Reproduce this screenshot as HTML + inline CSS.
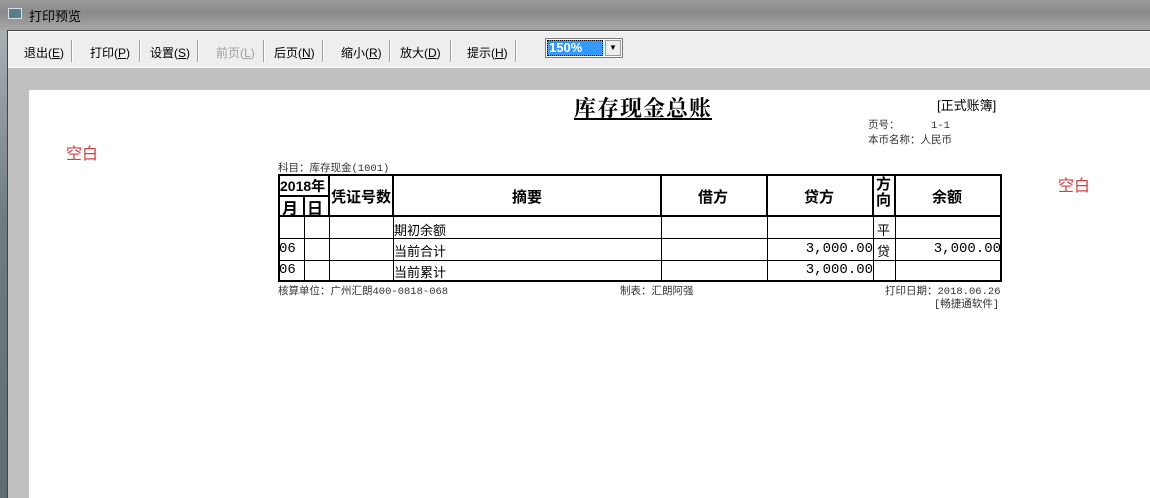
<!DOCTYPE html>
<html><head><meta charset="utf-8"><style>
*{margin:0;padding:0;box-sizing:border-box}
body{width:1150px;height:498px;overflow:hidden;position:relative;background:#c0c0c0;font-family:"Liberation Sans","Noto Sans CJK SC",sans-serif;}
.a{position:absolute;white-space:nowrap}
.tb{font-size:12px;color:#000;top:44px}
.sep{position:absolute;top:40px;width:2px;height:22px;border-left:1px solid #a0a0a0;border-right:1px solid #fff}
.h{position:absolute;background:#000}
.s{font-family:"Liberation Serif","Noto Serif CJK SC",serif}
.sm{font-size:10.5px;color:#333;font-family:"Liberation Mono","Noto Sans CJK SC",monospace}
.c{font-size:13px;font-family:"Liberation Mono","Noto Sans CJK SC",monospace}
.n{font-size:14px;font-family:"Liberation Mono",monospace}
.b{font-weight:bold;font-size:15px;font-family:"Liberation Sans","Noto Sans CJK SC",sans-serif}
</style></head><body>
<div class="a" style="left:0;top:0;width:1150px;height:31px;background:linear-gradient(#9a9a9a,#8a8a8a 40%,#a8a8a8)"></div>
<div class="a" style="left:0;top:31px;width:8px;height:467px;background:linear-gradient(#a8b0b4,#6f7c84 40%,#5f6c74)"></div>
<div class="a" style="left:7px;top:30px;width:1143px;height:1px;background:#444"></div>
<div class="a" style="left:7px;top:30px;width:1px;height:468px;background:#444"></div>
<div class="a" style="left:8px;top:8px;width:14px;height:11px;background:#5a7f88;border:1px solid #dde"></div>
<div class="a" style="left:29px;top:6px;font-size:13px;color:#000">打印预览</div>
<div class="a" style="left:8px;top:31px;width:1142px;height:36px;background:#eeeeee;border-top:1px solid #fff"></div>
<div class="a tb" style="left:24px">退出(<u>E</u>)</div>
<div class="sep" style="left:71px"></div>
<div class="a tb" style="left:90px">打印(<u>P</u>)</div>
<div class="sep" style="left:139px"></div>
<div class="a tb" style="left:150px">设置(<u>S</u>)</div>
<div class="sep" style="left:197px"></div>
<div class="a tb" style="left:216px;color:#a0a0a0">前页(<u>L</u>)</div>
<div class="sep" style="left:263px"></div>
<div class="a tb" style="left:274px">后页(<u>N</u>)</div>
<div class="sep" style="left:322px"></div>
<div class="a tb" style="left:341px">缩小(<u>R</u>)</div>
<div class="sep" style="left:389px"></div>
<div class="a tb" style="left:400px">放大(<u>D</u>)</div>
<div class="sep" style="left:450px"></div>
<div class="a tb" style="left:467px">提示(<u>H</u>)</div>
<div class="sep" style="left:515px"></div>
<div class="a" style="left:545px;top:38px;width:78px;height:20px;background:#fff;border:1px solid #7a7a7a"></div>
<div class="a" style="left:547px;top:40px;width:56px;height:16px;background:#3399ff;border:1px dotted #000;color:#fff;font-size:13px;font-weight:bold;line-height:14px;padding-left:1px">150%</div>
<div class="a" style="left:605px;top:40px;width:16px;height:16px;background:#eee;border:1px solid #999;font-size:8px;text-align:center;line-height:14px">▼</div>
<div class="a" style="left:8px;top:67px;width:1142px;height:1px;background:#f8f8f8"></div>
<div class="a" style="left:29px;top:90px;width:1121px;height:408px;background:#fff"></div>
<div class="a" style="left:66px;top:140px;font-size:16px;color:#d04040">空白</div>
<div class="a" style="left:1058px;top:172px;font-size:16px;color:#d04040">空白</div>
<div class="a s" style="left:574px;top:92px;font-size:22px;font-weight:bold;text-decoration:underline;letter-spacing:1px">库存现金总账</div>
<div class="a" style="left:937px;top:95px;font-size:13px">[正式账簿]</div>
<div class="a sm" style="left:868px;top:117px">页号：&nbsp;&nbsp;&nbsp;&nbsp;&nbsp;1-1</div>
<div class="a sm" style="left:868px;top:132px">本币名称：人民币</div>
<div class="a sm" style="left:278px;top:160px">科目：库存现金(1001)</div>
<div class="h" style="left:278px;top:174px;width:724px;height:2px"></div>
<div class="h" style="left:278px;top:195px;width:51px;height:2px"></div>
<div class="h" style="left:278px;top:215px;width:724px;height:2px"></div>
<div class="h" style="left:278px;top:238px;width:724px;height:1px"></div>
<div class="h" style="left:278px;top:260px;width:724px;height:1px"></div>
<div class="h" style="left:278px;top:280px;width:724px;height:2px"></div>
<div class="h" style="left:278px;top:174px;width:2px;height:108px"></div>
<div class="h" style="left:303px;top:195px;width:2px;height:21px"></div>
<div class="h" style="left:304px;top:216px;width:1px;height:65px"></div>
<div class="h" style="left:328px;top:174px;width:2px;height:42px"></div>
<div class="h" style="left:329px;top:216px;width:1px;height:65px"></div>
<div class="h" style="left:392px;top:174px;width:2px;height:42px"></div>
<div class="h" style="left:393px;top:216px;width:1px;height:65px"></div>
<div class="h" style="left:660px;top:174px;width:2px;height:42px"></div>
<div class="h" style="left:661px;top:216px;width:1px;height:65px"></div>
<div class="h" style="left:766px;top:174px;width:2px;height:42px"></div>
<div class="h" style="left:767px;top:216px;width:1px;height:65px"></div>
<div class="h" style="left:872px;top:174px;width:2px;height:42px"></div>
<div class="h" style="left:873px;top:216px;width:1px;height:65px"></div>
<div class="h" style="left:894px;top:174px;width:2px;height:42px"></div>
<div class="h" style="left:895px;top:216px;width:1px;height:65px"></div>
<div class="h" style="left:1000px;top:174px;width:2px;height:108px"></div>
<div class="a b" style="left:280px;top:176px;font-size:14px">2018年</div>
<div class="a b" style="left:282px;top:195px;font-size:16px">月</div>
<div class="a b" style="left:307px;top:195px;font-size:16px">日</div>
<div class="a b" style="left:331px;top:186px">凭证号数</div>
<div class="a b" style="left:512px;top:186px">摘要</div>
<div class="a b" style="left:698px;top:186px">借方</div>
<div class="a b" style="left:804px;top:186px">贷方</div>
<div class="a b" style="left:876px;top:177px;line-height:16px">方<br>向</div>
<div class="a b" style="left:932px;top:186px">余额</div>
<div class="a c" style="left:394px;top:220px">期初余额</div>
<div class="a c" style="left:877px;top:220px">平</div>
<div class="a n" style="left:279px;top:241px">06</div>
<div class="a c" style="left:394px;top:241px">当前合计</div>
<div class="a n" style="left:770px;top:241px;width:103px;text-align:right">3,000.00</div>
<div class="a c" style="left:877px;top:241px">贷</div>
<div class="a n" style="left:896px;top:241px;width:105px;text-align:right">3,000.00</div>
<div class="a n" style="left:279px;top:262px">06</div>
<div class="a c" style="left:394px;top:262px">当前累计</div>
<div class="a n" style="left:770px;top:262px;width:103px;text-align:right">3,000.00</div>
<div class="a sm" style="left:278px;top:283px">核算单位：广州汇朗400-0818-068</div>
<div class="a sm" style="left:620px;top:283px">制表：汇朗阿强</div>
<div class="a sm" style="left:885px;top:283px">打印日期：2018.06.26</div>
<div class="a sm" style="left:934px;top:296px">[畅捷通软件]</div>
</body></html>
